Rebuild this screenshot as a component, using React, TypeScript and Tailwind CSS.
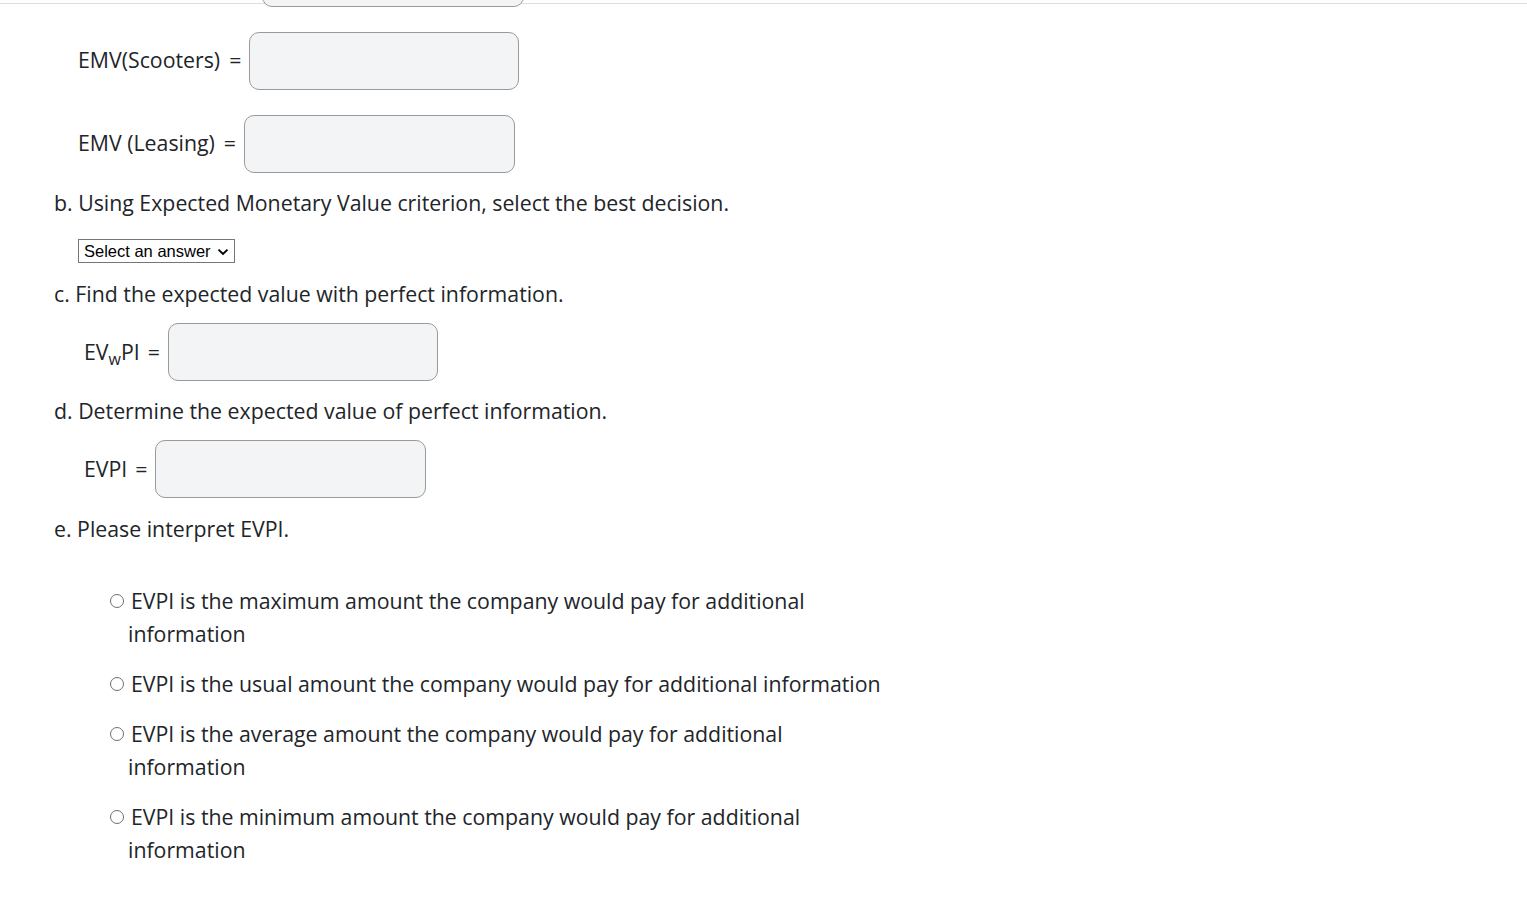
import { useState } from 'react'

function AnswerBox({ className = '' }: { className?: string }) {
  return (
    <input
      type="text"
      className={`h-[58px] w-[270px] rounded-[10px] border border-[#9a9a9a] bg-[#f3f4f6] px-3 text-[#212529] outline-none ${className}`}
    />
  )
}

const options = [
  'EVPI is the maximum amount the company would pay for additional information',
  'EVPI is the usual amount the company would pay for additional information',
  'EVPI is the average amount the company would pay for additional information',
  'EVPI is the minimum amount the company would pay for additional information',
]

export default function App() {
  const [picked, setPicked] = useState<number | null>(null)

  return (
    <div
      className="min-h-screen bg-white text-[21.3px] text-[#212529]"
      style={{ fontFamily: '"Open Sans", "Noto Sans", sans-serif' }}
    >
      <div className="h-[3px]" />
      <div className="relative border-t border-[#dedede]">
        <div className="ml-[262px] -mt-[55px] h-[58px] w-[262px] rounded-[10px] border border-[#9a9a9a] bg-[#f3f4f6]" />
      </div>

      <div className="pl-[54px] pt-[25px]">
        <div className="flex items-center pl-[24px] leading-[30px]">
          <span className="-mt-[2px]">
            EMV(Scooters)<span className="ml-[9px]">=</span>
          </span>
          <AnswerBox className="ml-[8px]" />
        </div>

        <div className="mt-[25px] flex items-center pl-[24px] leading-[30px]">
          <span className="-mt-[2px]">
            EMV (Leasing)<span className="ml-[9px]">=</span>
          </span>
          <AnswerBox className="ml-[8px] w-[271px]" />
        </div>

        <p className="mt-[15px] leading-[30px]">b. Using Expected Monetary Value criterion, select the best decision.</p>

        <div className="mt-[21px] flex pl-[24px]">
          <div className="relative flex h-[24px] w-[157px] items-center border border-[#767676] bg-white">
            <select
              className="h-full w-full appearance-none bg-transparent pl-[5px] text-[16.5px] leading-none text-black outline-none"
              style={{ fontFamily: '"Liberation Sans", Arial, sans-serif' }}
              defaultValue=""
            >
              <option value="">Select an answer</option>
              <option value="s">Scooters</option>
              <option value="l">Leasing</option>
            </select>
            <svg className="pointer-events-none absolute right-[5px] top-[8px]" width="12" height="8" viewBox="0 0 12 8" fill="none">
              <path d="M1.5 1.6 6 6 10.5 1.6" stroke="#000" strokeWidth="1.9" />
            </svg>
          </div>
        </div>

        <p className="mt-[16px] leading-[30px]">c. Find the expected value with perfect information.</p>

        <div className="mt-[14px] flex items-center pl-[30px] leading-[30px]">
          <span>
            EV<sub className="relative top-[5px] text-[16px]">w</sub>PI<span className="ml-[8px]">=</span>
          </span>
          <AnswerBox className="ml-[8px]" />
        </div>

        <p className="mt-[15px] leading-[30px]">d. Determine the expected value of perfect information.</p>

        <div className="mt-[14px] flex items-center pl-[30px] leading-[30px]">
          <span>
            EVPI<span className="ml-[8px]">=</span>
          </span>
          <AnswerBox className="ml-[8px] w-[271px]" />
        </div>

        <p className="mt-[16px] leading-[30px]">e. Please interpret EVPI.</p>

        <div className="mt-[40px] w-[836px] pl-[56px]">
          {options.map((o, i) => (
            <label
              key={i}
              className="mb-[17px] block cursor-pointer pl-[18px] -indent-[18px] leading-[33px]"
              onClick={() => setPicked(i)}
            >
              <span className="relative -top-[2px] mr-[7px] inline-flex h-[14px] w-[14px] items-center justify-center rounded-full border border-[#6f6f6f] align-middle">
                {picked === i && <span className="h-[8px] w-[8px] rounded-full bg-[#0075ff]" />}
              </span>
              {o}
            </label>
          ))}
        </div>
      </div>
    </div>
  )
}
